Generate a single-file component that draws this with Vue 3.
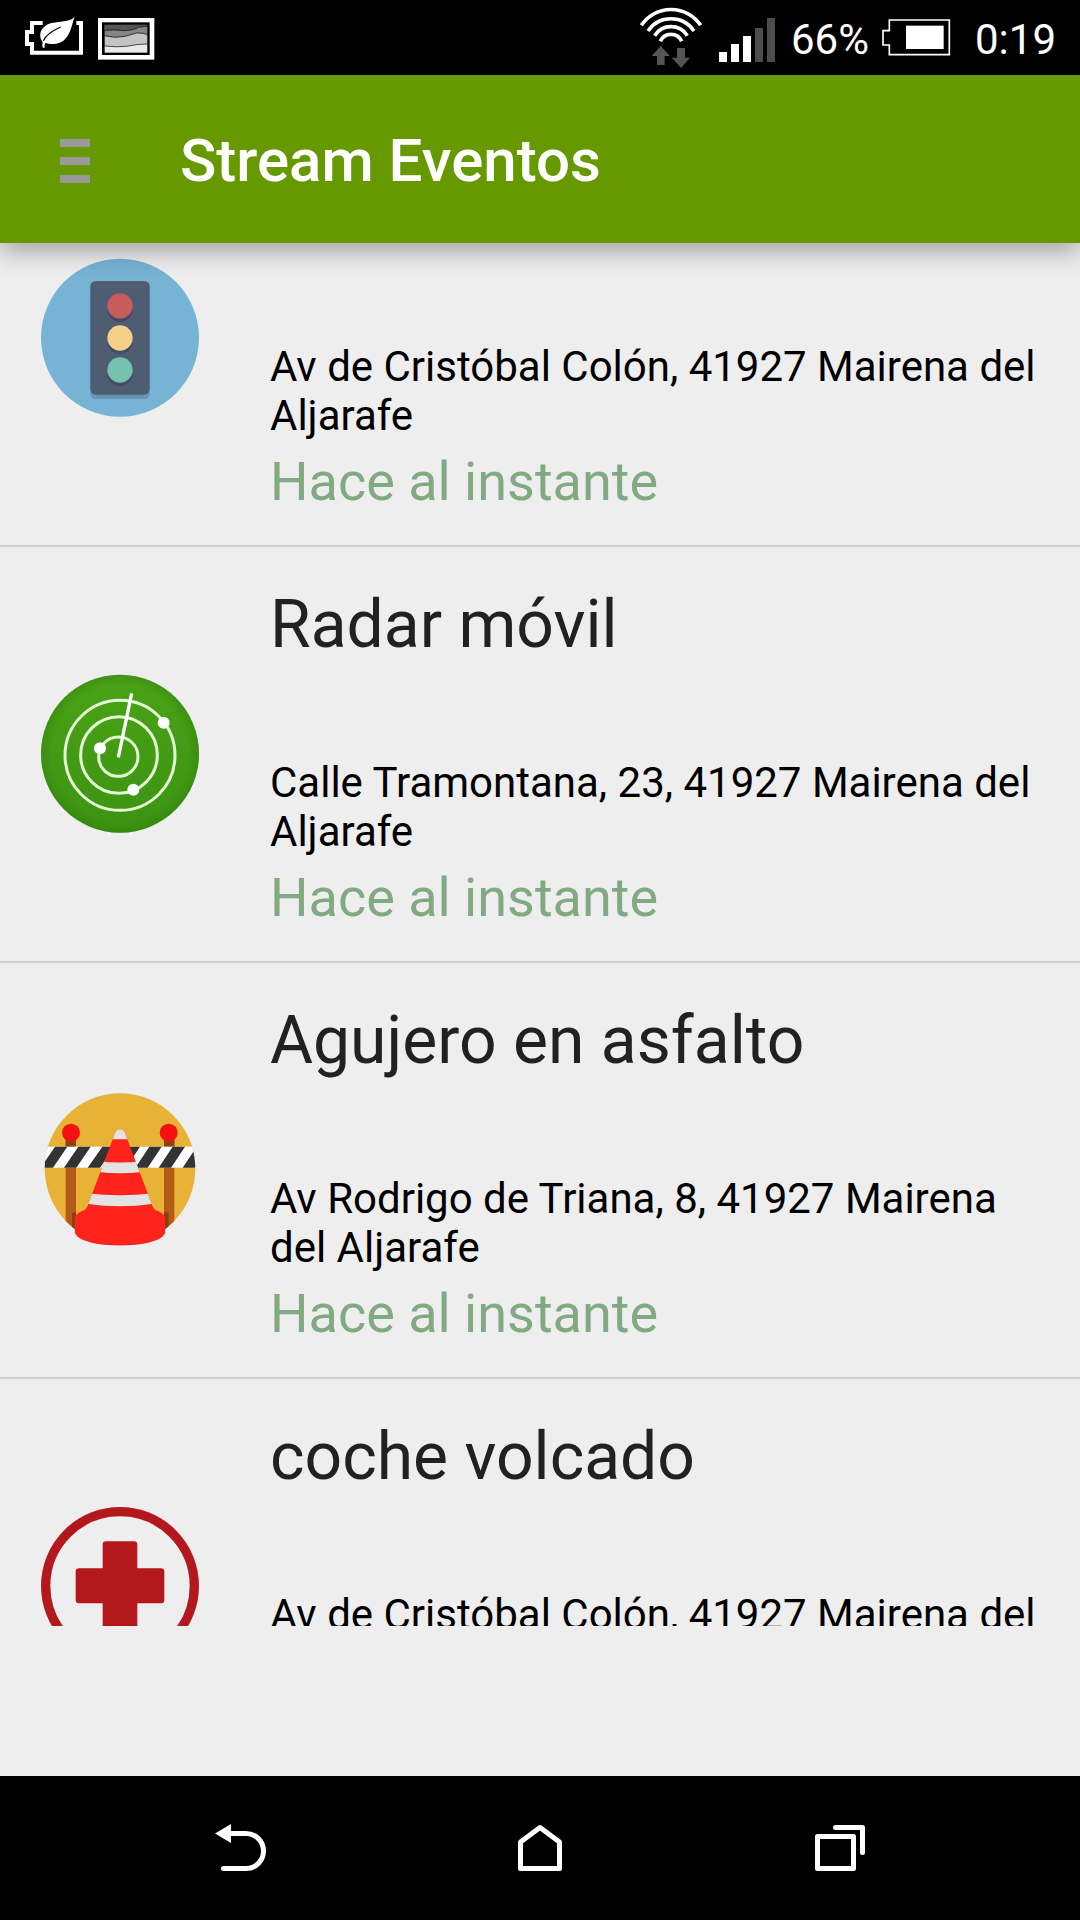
<script setup>
import { onMounted, ref } from 'vue'

const events = [
  { id: 1, icon: 'traffic', title: '', address: 'Av de Cristóbal Colón, 41927 Mairena del Aljarafe', time: 'Hace al instante' },
  { id: 2, icon: 'radar', title: 'Radar móvil', address: 'Calle Tramontana, 23, 41927 Mairena del Aljarafe', time: 'Hace al instante' },
  { id: 3, icon: 'cone', title: 'Agujero en asfalto', address: 'Av Rodrigo de Triana, 8, 41927 Mairena del Aljarafe', time: 'Hace al instante' },
  { id: 4, icon: 'medical', title: 'coche volcado', address: 'Av de Cristóbal Colón, 41927 Mairena del Aljarafe', time: 'Hace al instante' },
]

const list = ref(null)

onMounted(() => {
  list.value.scrollTop = 112
})
</script>

<template>
  <div class="screen">
    <div class="status">
      <div class="status-side">
        <svg class="saver" viewBox="72 0 180 225" aria-hidden="true">
          <path d="M128 69H96V96H81V132H96V158H243V69H229" fill="none" stroke="#fff" stroke-width="12" />
          <path d="M224 51C213 76 212 130 160 132Q146 133 137 128Q132 134 134 143H128Q126 134 128 126C114 108 120 84 145 72C170 62 205 70 224 51Z" fill="#fff" stroke="#000" stroke-width="8" paint-order="stroke" />
          <path d="M130 122Q140 100 182 81" fill="none" stroke="#000" stroke-width="4" />
        </svg>
        <svg class="gallery" viewBox="291 0 174 225" aria-hidden="true">
          <rect x="294" y="54" width="169" height="125" fill="#fff" />
          <rect x="306" y="67" width="143" height="98" fill="#000" />
          <rect x="313" y="74" width="130" height="85" fill="#555" />
          <path d="M313 91Q345 88 375 92Q405 90 415 82L443 78V159H313Z" fill="#858585" stroke="#000" stroke-width="2" />
          <path d="M313 107Q345 116 375 109L410 99Q430 98 443 104V159H313Z" fill="#c4c4c4" stroke="#000" stroke-width="2" />
          <path d="M313 138Q350 142 380 139Q410 132 443 132V159H313Z" fill="#e9e9e9" stroke="#000" stroke-width="2" />
        </svg>
      </div>
      <div class="status-side">
        <svg class="wifi" viewBox="60 0 192 225" aria-hidden="true">
          <g fill="none" stroke="#fff" stroke-width="11">
            <path d="M67 76A107 107 0 0 1 245 76" />
            <path d="M87 93A83 83 0 0 1 225 93" />
            <path d="M107 107A58 58 0 0 1 205 107" />
            <path d="M124 124A35 35 0 0 1 188 124" />
          </g>
          <path d="M98 168L125 138L153 168H137V195H114V168ZM158 173H174V144H198V173H213L186 204Z" fill="#555" />
        </svg>
        <svg class="signal" viewBox="297 0 174 225" aria-hidden="true">
          <path d="M300 156h24v30h-24zM336 132h24v54h-24zM372 108h24v78h-24z" fill="#fff" />
          <path d="M408 84h24v102h-24zM444 54h24v132h-24z" fill="#4d4d4d" />
        </svg>
        <span class="status-text">66%</span>
        <svg class="battery" viewBox="780 0 210 225" aria-hidden="true">
          <path d="M805 60H985V164H805V135H786V92H805Z" fill="none" stroke="#fff" stroke-width="5" />
          <rect x="855" y="77" width="113" height="70" fill="#fff" />
        </svg>
        <span class="status-text clock">0:19</span>
      </div>
    </div>

    <header class="app-bar">
      <button class="menu" type="button" aria-label="Menú">
        <span class="menu-line"></span>
        <span class="menu-line"></span>
        <span class="menu-line"></span>
      </button>
      <h1 class="heading">Stream Eventos</h1>
    </header>

    <main class="content">
      <ul ref="list" class="events">
        <li v-for="event in events" :key="event.id" class="event">
          <svg v-if="event.icon === 'traffic'" class="event-icon" viewBox="60 54 480 480" aria-hidden="true">
            <circle cx="300" cy="293" r="237" fill="#77b3d4" />
            <rect x="211" y="136" width="178" height="341" rx="16" fill="#6795b2" />
            <rect x="211" y="123" width="178" height="341" rx="16" fill="#4f5d73" />
            <g fill="#414c60">
              <circle cx="300" cy="208" r="38" />
              <circle cx="300" cy="304" r="38" />
              <circle cx="300" cy="401" r="38" />
            </g>
            <circle cx="300" cy="198" r="38" fill="#c75c5c" />
            <circle cx="300" cy="294" r="38" fill="#f5cf87" />
            <circle cx="300" cy="390" r="38" fill="#76c2af" />
          </svg>

          <svg v-else-if="event.icon === 'radar'" class="event-icon" viewBox="60 42 480 480" aria-hidden="true">
            <defs>
              <linearGradient id="radar-fill" x1="0" y1="0" x2="0" y2="1">
                <stop offset="0" stop-color="#49a316" />
                <stop offset="1" stop-color="#3c9312" />
              </linearGradient>
              <radialGradient id="radar-edge">
                <stop offset="0.86" stop-color="#2f7a0c" stop-opacity="0" />
                <stop offset="1" stop-color="#2f7a0c" stop-opacity="0.4" />
              </radialGradient>
            </defs>
            <circle cx="300" cy="281" r="237" fill="url(#radar-fill)" />
            <circle cx="300" cy="281" r="237" fill="url(#radar-edge)" />
            <g fill="none" stroke="#e4fbd6" stroke-width="9">
              <circle cx="300" cy="286" r="165" />
              <circle cx="297" cy="285" r="115" />
              <circle cx="295" cy="290" r="59" />
            </g>
            <path d="M295 292L335 100" stroke="#fff" stroke-width="10" />
            <g fill="#fff">
              <circle cx="431" cy="188" r="18" />
              <circle cx="240" cy="265" r="18" />
              <circle cx="340" cy="389" r="18" />
            </g>
          </svg>

          <svg v-else-if="event.icon === 'cone'" class="event-icon" viewBox="60 60 480 480" aria-hidden="true">
            <defs>
              <clipPath id="barrier-disc"><circle cx="300" cy="296" r="226" /></clipPath>
              <clipPath id="barrier-cone">
                <path d="M281 200C286 170 314 170 319 200L396 404Q400 418 412 422Q436 430 436 452V487C425 540 175 540 164 487V452Q164 430 188 422Q200 418 204 404Z" />
              </clipPath>
            </defs>
            <g clip-path="url(#barrier-disc)">
              <rect x="60" y="60" width="480" height="480" fill="#e7b236" />
              <path d="M137 200H168V480H137ZM432 200H463V480H432Z" fill="#b35a17" />
              <path d="M137 200H168V230H137ZM432 200H463V230H432ZM156 430L168 424V480H156ZM432 424L446 430V480H432Z" fill="#8c4210" />
              <rect x="60" y="230" width="480" height="63" fill="#fff" />
              <path d="M105 230H142L99 293H62ZM175 230H212L169 293H132ZM247 230H284L240 293H203ZM323 230H360L318 293H281ZM388 230H425L383 293H346ZM458 230H495L453 293H416ZM530 230H567L525 293H488Z" fill="#333" />
            </g>
            <circle cx="153" cy="188" r="27" fill="#f51111" />
            <circle cx="446" cy="188" r="27" fill="#f51111" />
            <g clip-path="url(#barrier-cone)">
              <rect x="150" y="160" width="300" height="380" fill="#ff231d" />
              <path d="M250 160H350V208H250ZM230 273Q300 282 370 273V305Q300 314 230 305ZM200 370Q300 382 400 370V401Q300 416 200 401Z" fill="#e3e3e3" />
            </g>
          </svg>

          <svg v-else class="event-icon" viewBox="60 78 480 480" aria-hidden="true">
            <circle cx="300" cy="318" r="223" fill="none" stroke="#b2181c" stroke-width="28" />
            <path d="M258 184H342Q352 184 352 194V265H423Q433 265 433 275V360Q433 370 423 370H352V442Q352 452 342 452H258Q248 452 248 442V370H177Q167 370 167 360V275Q167 265 177 265H248V194Q248 184 258 184Z" fill="#b2181c" />
          </svg>

          <div class="event-text">
            <h2 v-if="event.title" class="event-title">{{ event.title }}</h2>
            <p class="event-address">{{ event.address }}</p>
            <p class="event-time">{{ event.time }}</p>
          </div>
        </li>
      </ul>
    </main>

    <nav class="nav">
      <button class="nav-button" type="button" aria-label="Atrás">
        <svg class="nav-icon" viewBox="0 0 60 60" aria-hidden="true">
          <path d="M5 15.500L21 6V25Z" fill="#fff" />
          <path d="M20 15.500H36A17.500 17.500 0 0 1 36 50.500H13.500" fill="none" stroke="#fff" stroke-width="5" stroke-linecap="round" />
        </svg>
      </button>
      <button class="nav-button" type="button" aria-label="Inicio">
        <svg class="nav-icon" viewBox="0 0 60 60" aria-hidden="true">
          <path d="M30 9.500L49.500 24V50.500H10.500V24Z" fill="none" stroke="#fff" stroke-width="5" stroke-linejoin="round" />
        </svg>
      </button>
      <button class="nav-button" type="button" aria-label="Recientes">
        <svg class="nav-icon" viewBox="0 0 60 60" aria-hidden="true">
          <g fill="none" stroke="#fff" stroke-width="5" stroke-linejoin="round" stroke-linecap="round">
            <path d="M7.500 18.500H43.500V50.500H7.500Z" />
            <path d="M25.500 9.500H52.500V34.500" />
          </g>
        </svg>
      </button>
    </nav>
  </div>
</template>

<style>
body {
  margin: 0;
  background: #eee;
}
</style>

<style scoped>
.screen {
  display: flex;
  flex-direction: column;
  height: 100vh;
  overflow: hidden;
  background: #eee;
  font-family: Roboto, sans-serif;
}

.status {
  display: flex;
  flex: none;
  justify-content: space-between;
  height: 75px;
  padding: 0 24px;
  background: #000;
  color: #fff;
}

.status-side {
  display: flex;
}

.status svg {
  flex: none;
  height: 75px;
}

.saver {
  width: 60px;
}

.gallery {
  width: 58px;
  margin-left: 13px;
}

.wifi {
  width: 64px;
}

.signal {
  width: 58px;
  margin: 0 15px;
}

.battery {
  width: 70px;
  margin: 0 24px 0 12px;
}

.status-text {
  padding-top: 2px;
  font-size: 42px;
  line-height: 75px;
}

.app-bar {
  position: relative;
  z-index: 1;
  display: flex;
  flex: none;
  align-items: center;
  gap: 60px;
  box-sizing: border-box;
  height: 168px;
  padding: 4px 30px 0;
  background: #690;
  box-shadow: 0 8px 24px rgba(0, 0, 0, 0.32);
}

.menu {
  display: flex;
  flex-direction: column;
  gap: 10px;
  padding: 30px;
  border: 0;
  background: none;
}

.menu-line {
  width: 30px;
  height: 8px;
  background: #999;
}

.heading {
  margin: 0;
  color: #fff;
  font-size: 60px;
  font-weight: 500;
  line-height: 72px;
}

.content {
  display: flex;
  flex: 1;
  flex-direction: column;
  min-height: 0;
  padding-bottom: 150px;
}

.events {
  flex: 1;
  min-height: 0;
  margin: 0;
  padding: 0;
  overflow-y: auto;
  list-style: none;
  scrollbar-width: none;
}

.event {
  display: flex;
  align-items: center;
  gap: 70px;
  box-sizing: border-box;
  min-height: 416px;
  padding: 0 36px 0 40px;
  border-bottom: 2px solid #d0d0d0;
}

.event-icon {
  flex: none;
  width: 160px;
  height: 160px;
}

.event-text {
  flex: 1;
  align-self: flex-end;
  padding-bottom: 31px;
}

.event-title {
  margin: 0 0 94px;
  color: #212121;
  font-size: 66px;
  font-weight: 400;
  line-height: 78px;
}

.event-address {
  margin: 0 0 10px;
  color: #000;
  font-size: 42px;
  line-height: 49px;
}

.event-time {
  margin: 0;
  color: #82aa82;
  font-size: 54px;
  line-height: 64px;
}

.nav {
  display: flex;
  flex: none;
  height: 144px;
  padding: 0 90px;
  background: #000;
}

.nav-button {
  display: flex;
  flex: 1;
  align-items: center;
  justify-content: center;
  padding: 0;
  border: 0;
  background: none;
}

.nav-icon {
  width: 60px;
  height: 60px;
}
</style>
